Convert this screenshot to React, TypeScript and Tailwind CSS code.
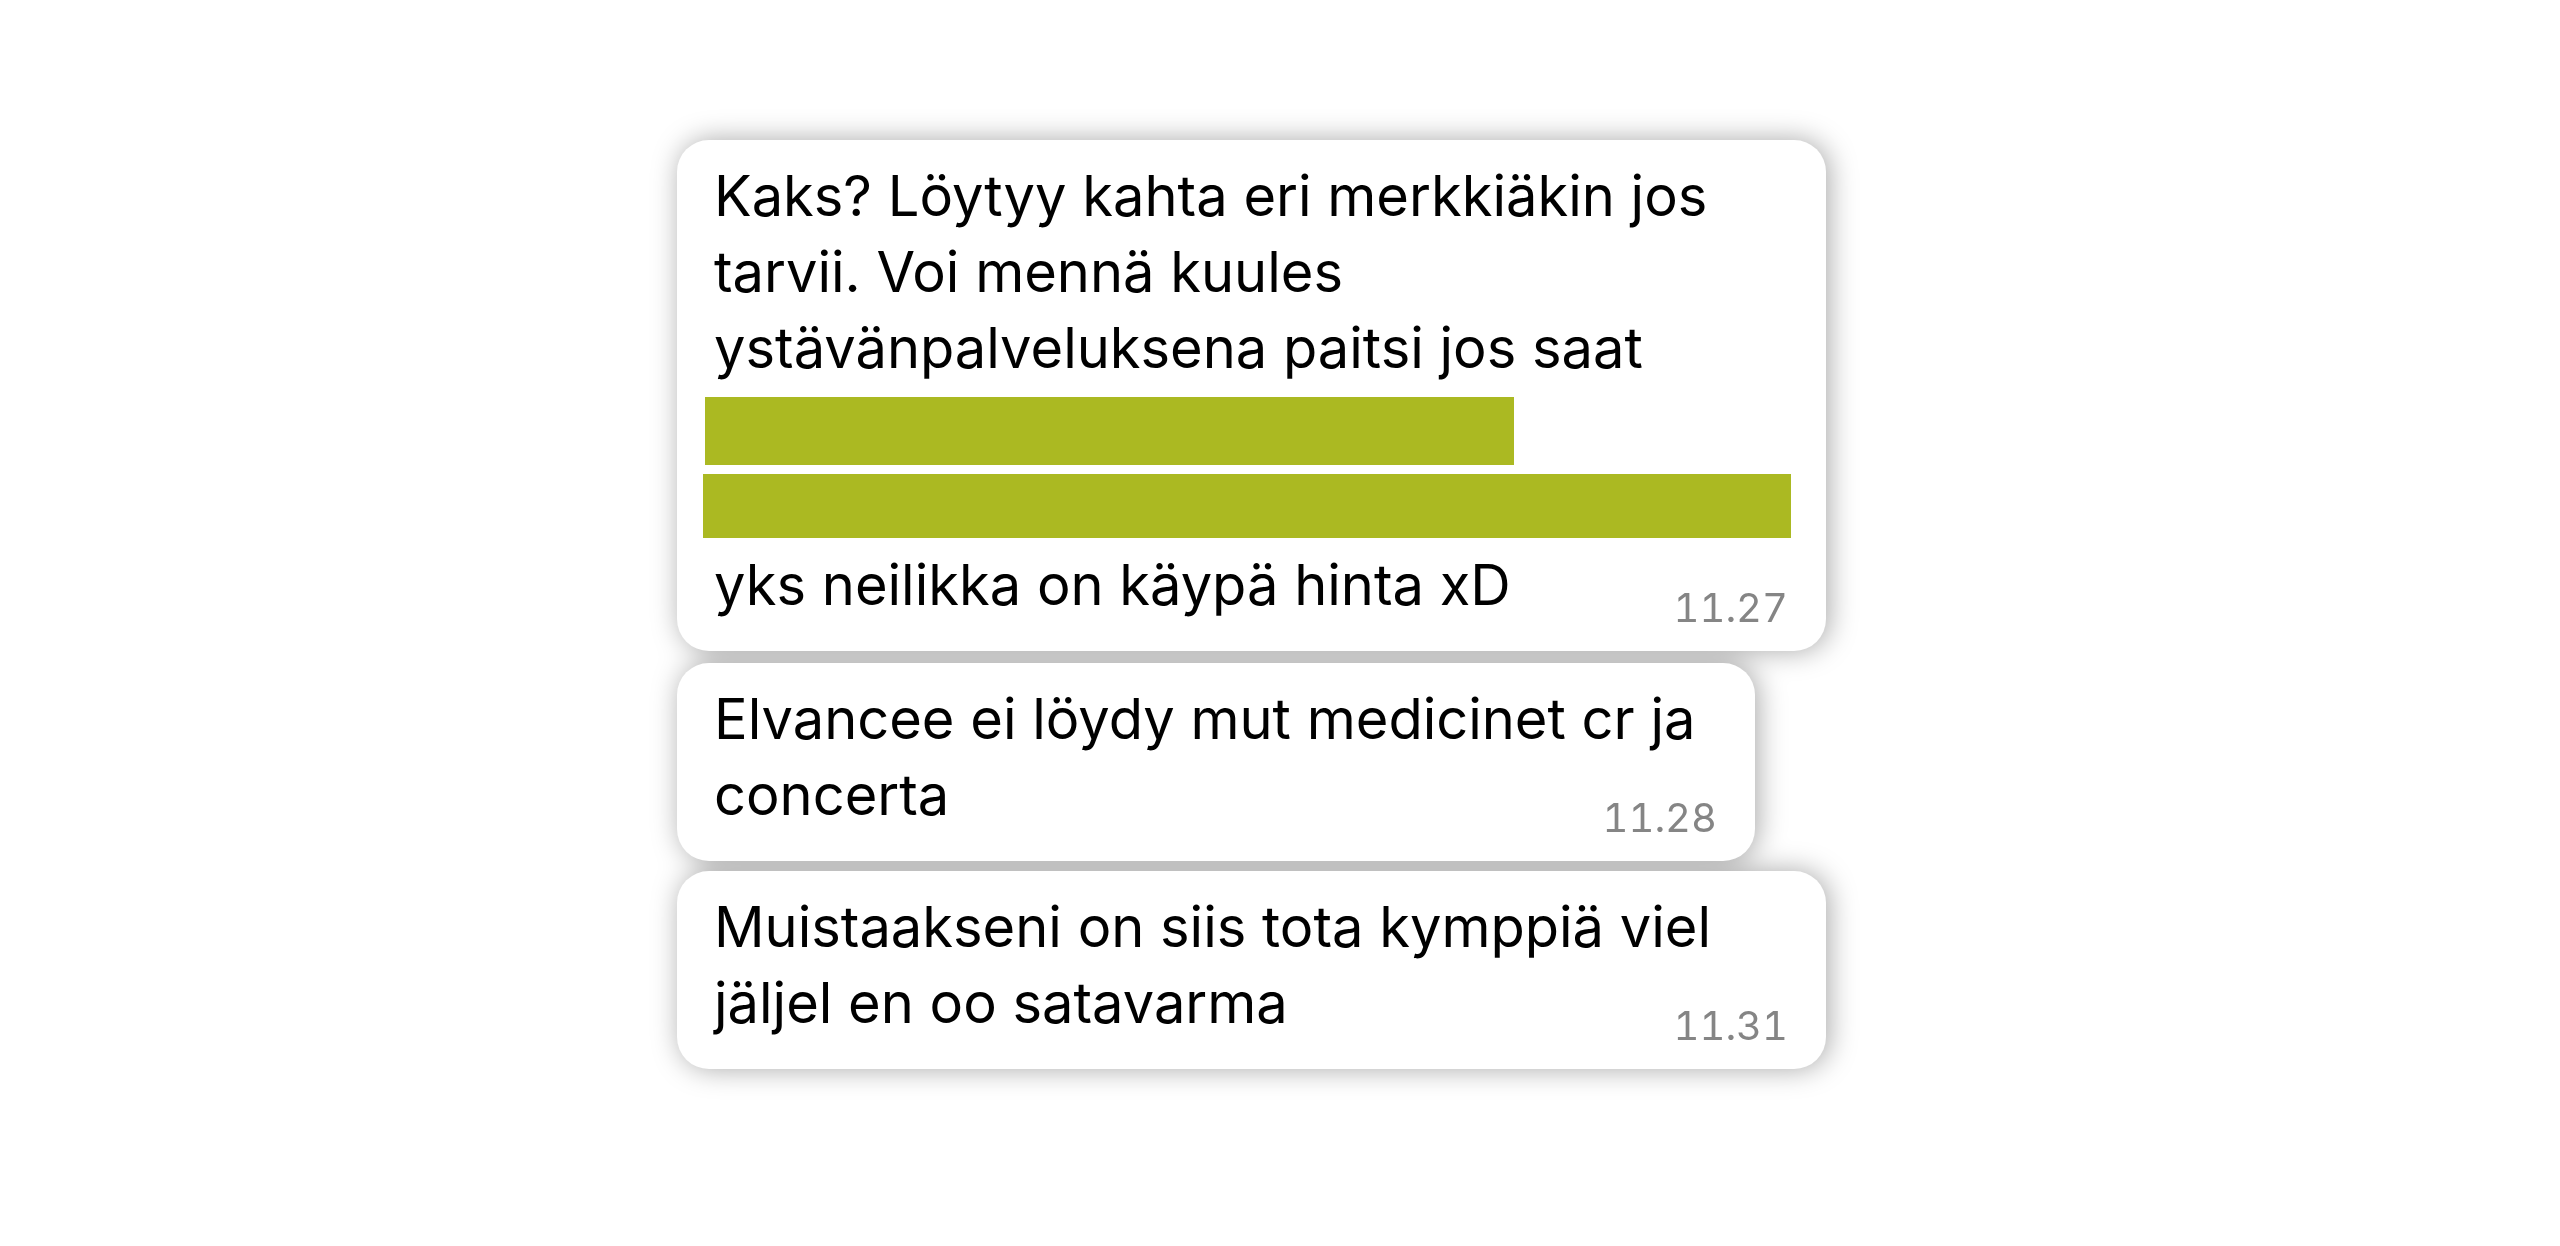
import React from 'react';

const Stamp = ({ time }: { time: string }) => (
  <span className="text-[40px] leading-[40px] text-[#858585] tabular-nums">{time}</span>
);

const App = () => {
  return (
    <div className="min-h-screen bg-white font-[Inter,sans-serif] text-black">
      <div className="flex flex-col items-start pl-[677px] pt-[140px] drop-shadow-[3px_0_14px_rgba(0,0,0,0.34)]">
        <div className="w-[1149px] rounded-[32px] bg-white pl-[37px] pr-[38px] pt-[18px] pb-[23px]">
          <p className="text-[56px] leading-[76px]">Kaks? Löytyy kahta eri merkkiäkin jos</p>
          <p className="text-[56px] leading-[76px]">tarvii. Voi mennä kuules</p>
          <p className="text-[56px] leading-[76px]">ystävänpalveluksena paitsi jos saat</p>
          <div className="mt-[11px] ml-[-9px] h-[68px] w-[809px] bg-[#abb922]" />
          <div className="mt-[9px] ml-[-11px] h-[64px] w-[1088px] bg-[#abb922]" />
          <div className="mt-[9px] flex items-end justify-between">
            <span className="mb-[5px] text-[56px] leading-[76px]">yks neilikka on käypä hinta xD</span>
            <Stamp time="11.27" />
          </div>
        </div>

        <div className="mt-[12px] w-[1078px] rounded-[32px] bg-white pl-[37px] pr-[38px] pt-[18px] pb-[23px]">
          <p className="text-[56px] leading-[76px]">Elvancee ei löydy mut medicinet cr ja</p>
          <div className="flex items-end justify-between">
            <span className="mb-[5px] text-[56px] leading-[76px]">concerta</span>
            <Stamp time="11.28" />
          </div>
        </div>

        <div className="mt-[10px] w-[1149px] rounded-[32px] bg-white pl-[37px] pr-[38px] pt-[18px] pb-[23px]">
          <p className="text-[56px] leading-[76px]">Muistaakseni on siis tota kymppiä viel</p>
          <div className="flex items-end justify-between">
            <span className="mb-[5px] text-[56px] leading-[76px]">jäljel en oo satavarma</span>
            <Stamp time="11.31" />
          </div>
        </div>
      </div>
    </div>
  );
};

export default App;
